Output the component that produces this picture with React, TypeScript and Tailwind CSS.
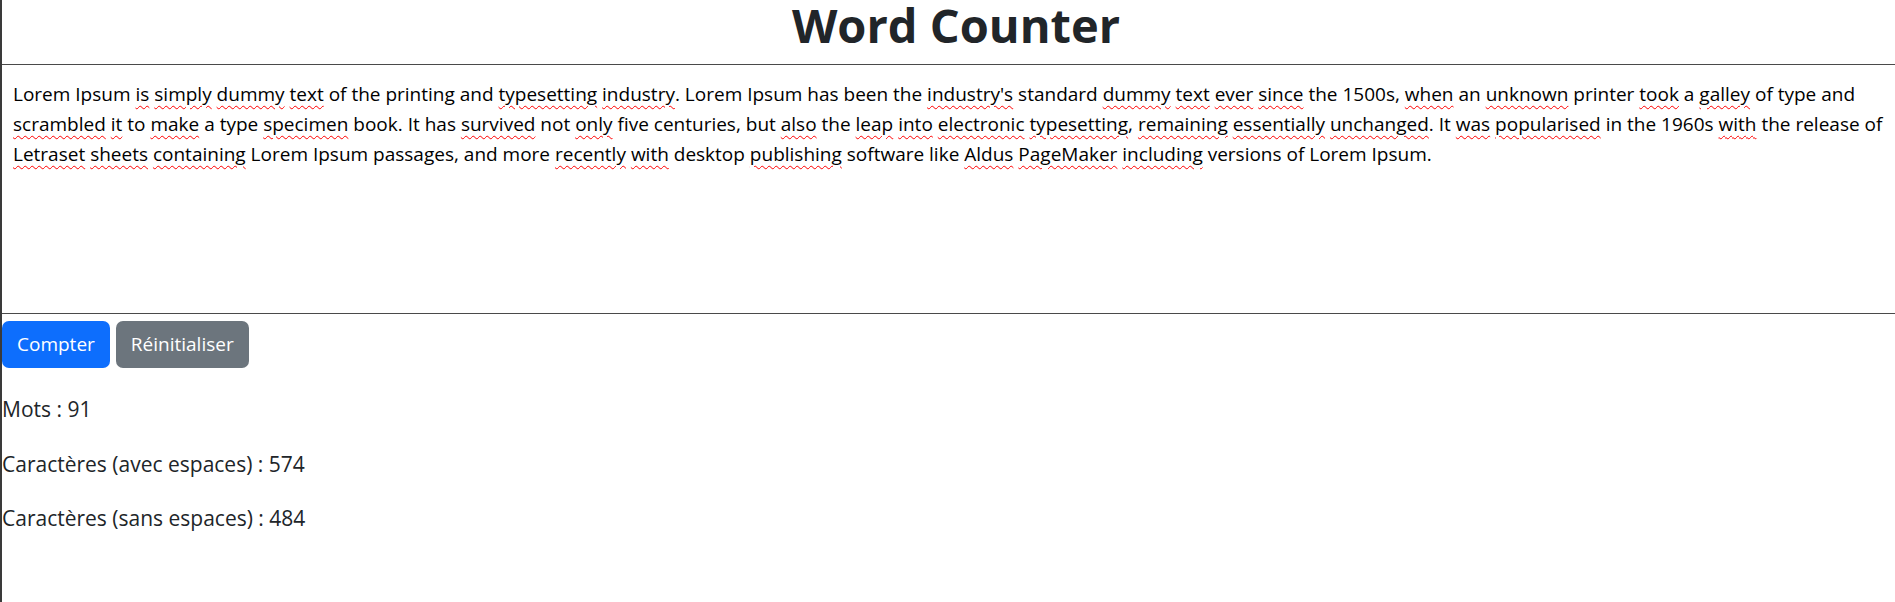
const lines = [
  "Lorem Ipsum [is] [simply] [dummy] [text] of the printing and [typesetting] [industry]. Lorem Ipsum has been the [industry's] standard [dummy] [text] [ever] [since] the 1500s, [when] an [unknown] printer [took] a [galley] of type and",
  "[scrambled] [it] to [make] a type [specimen] book. It has [survived] not [only] five centuries, but [also] the [leap] [into] [electronic] [typesetting], [remaining] [essentially] [unchanged]. It [was] [popularised] in the 1960s [with] the release of",
  "[Letraset] [sheets] [containing] Lorem Ipsum passages, and more [recently] [with] desktop [publishing] software like [Aldus] [PageMaker] [including] versions of Lorem Ipsum.",
];

// words in [brackets] get the spell-check squiggle
function Line({ text }: { text: string }) {
  const parts = text.split(/(\[[^\]]+\])/);
  return (
    <div className="whitespace-nowrap">
      {parts.map((p, i) =>
        p.startsWith('[') ? (
          <span key={i} className="underline decoration-wavy decoration-[#ff0000] decoration-1 underline-offset-[4px]">
            {p.slice(1, -1)}
          </span>
        ) : (
          <span key={i}>{p}</span>
        )
      )}
    </div>
  );
}

export default function App() {
  return (
    <div className="h-[602px] overflow-hidden border-l-2 border-[#3a3a3a] bg-white font-['Open_Sans',sans-serif] text-[#212529]">
      <div className="w-[1908px]">
        <h1 className="mb-[14px] text-center text-[47px] font-bold leading-[50px]">Word Counter</h1>

        {/* Text area */}
        <div className="h-[250px] w-full border border-l-0 border-[#4a4a4a] pl-[11px] pt-[14px] text-[19px] leading-[30px] text-black">
          {lines.map((l, i) => (
            <Line key={i} text={l} />
          ))}
        </div>

        <div className="mt-[7px] flex gap-[6px]">
          <button type="button" className="h-[47px] rounded-[7px] bg-[#0d6efd] px-[15px] text-[19px] text-white">
            Compter
          </button>
          <button type="button" className="h-[47px] rounded-[7px] bg-[#6c757d] px-[15px] text-[19px] text-white">
            Réinitialiser
          </button>
        </div>

        {/* Results */}
        <div className="mt-[26px] text-[21px] leading-[31.5px]">
          <p className="mb-[23px]">Mots : 91</p>
          <p className="mb-[23px]">Caractères (avec espaces) : 574</p>
          <p className="mb-[23px]">Caractères (sans espaces) : 484</p>
        </div>
      </div>
    </div>
  );
}
